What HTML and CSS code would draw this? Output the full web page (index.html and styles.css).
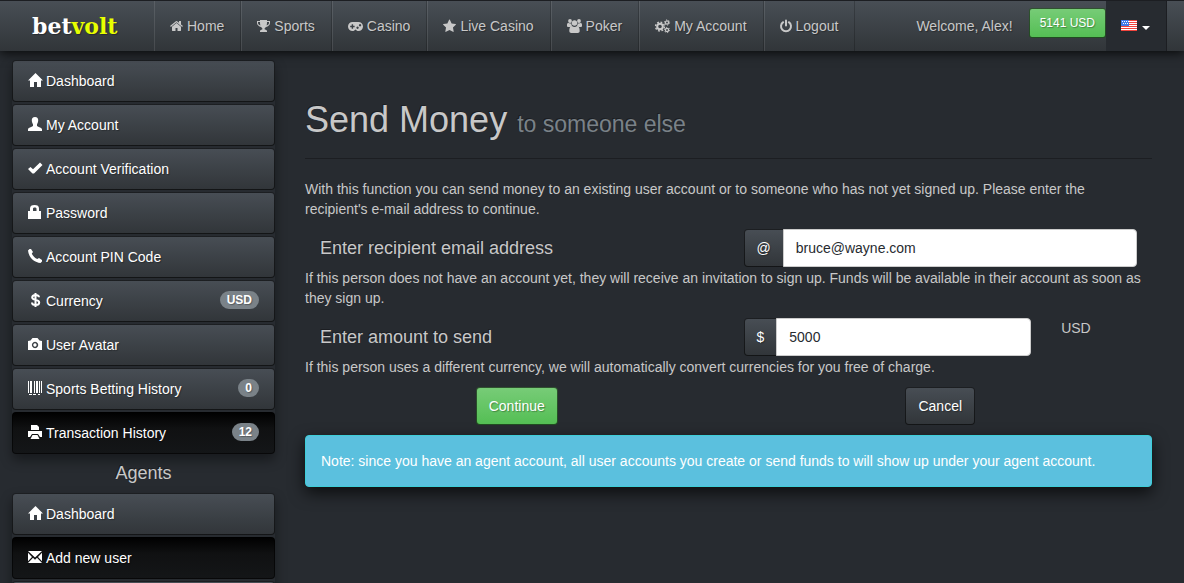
FILE: index.html
```html
<!DOCTYPE html>
<html lang="en">
<head>
<meta charset="UTF-8">
<meta name="viewport" content="width=device-width, initial-scale=1.0">
<title>Send Money - betvolt</title>
<link rel="stylesheet" href="styles.css">
</head>
<body>
<nav class="navbar">
    <a class="brand" href="#">bet<span>volt</span></a>
    <ul class="nav">
        <li><a href="#"><svg class="icon" width="13" height="14" viewBox="64 128 1664 1536"><path d="M1472 992v480q0 26-19 45t-45 19h-384v-384h-256v384h-384q-26 0-45-19t-19-45v-480q0-1 .5-3t.5-3l575-474 575 474q1 2 1 6zm223-69l-62 74q-8 9-21 11h-3q-13 0-21-7l-692-577-692 577q-12 8-24 7-13-2-21-11l-62-74q-8-10-7-23.500t11-21.500l719-599q32-26 76-26t76 26l244 204v-195q0-14 9-23t23-9h192q14 0 23 9t9 23v408l219 182q10 8 11 21.500t-7 23.500z"/></svg>Home</a></li>
        <li><a href="#"><svg class="icon" width="13" height="14" viewBox="0 0 13 14"><path d="M3 1h7v1h3v2c0 2-2 3.500-4 4-.7.900-1.500 1-1.500 2 0 .8 2.500.7 2.500 2v1H3v-1c0-1.300 2.500-1.200 2.500-2 0-1-.8-1.100-1.500-2C2 7.500 0 6 0 4V2h3zM1 3v1c0 1 1 2 2.400 2.600C3 5.500 3 4.300 3 3zM10 3c0 1.300 0 2.500-.4 3.600C11 6 12 5 12 4V3z" fill-rule="evenodd"/></svg>Sports</a></li>
        <li><a href="#"><svg class="icon" width="15" height="14" viewBox="0 0 15 14"><path d="M4.500 3h6a4.500 4.500 0 0 1 0 9c-1.400 0-2.300-.6-3-1.500-.7.900-1.600 1.500-3 1.500a4.500 4.500 0 0 1 0-9zM3.700 5.300v1.500H2.200v1.400h1.500v1.500h1.400V8.200h1.500V6.800H5.100V5.300zM9.500 7.500a1.200 1.200 0 1 0 .1 0zM12 5a1.200 1.200 0 1 0 .1 0z" fill-rule="evenodd"/></svg>Casino</a></li>
        <li><a href="#"><svg class="icon" width="13" height="14" viewBox="64 64 1664 1600"><path d="M1728 647q0 22-26 48l-363 354 86 500q1 7 1 20 0 21-10.500 35.500t-30.500 14.500q-19 0-40-12l-449-236-449 236q-22 12-40 12-21 0-31.500-14.500t-10.500-35.500q0-6 2-20l86-500-364-354q-25-27-25-48 0-37 56-46l502-73 225-455q19-41 49-41t49 41l225 455 502 73q56 9 56 46z"/></svg>Live Casino</a></li>
        <li><a href="#"><svg class="icon" width="15" height="14" viewBox="0 0 15 14"><circle cx="3" cy="2" r="1.900"/><circle cx="12" cy="2" r="1.900"/><circle cx="7.500" cy="4" r="2.700"/><path d="M0 7V5.500C0 4 1 4 1.500 4c1 .6 2 .6 2.800.2C4.200 5.500 4.800 6.300 5 6.700 4 7 3.500 7.400 3 8H1.500C.6 8 0 7.600 0 7zM15 7V5.500C15 4 14 4 13.500 4c-1 .6-2 .6-2.800.2.1 1.300-.5 2.100-.7 2.500 1 .3 1.500.7 2 1.300h1.500c.9 0 1.500-.4 1.500-1zM2.300 12c0-3 .7-5 2.700-5 1.500 1.200 3.500 1.200 5 0 2 0 2.700 2 2.700 5 0 1.200-.8 2-2 2H4.300c-1.200 0-2-.8-2-2z"/></svg>Poker</a></li>
        <li><a href="#"><svg class="icon" width="15" height="14" viewBox="0 0 15 14" fill="none"><circle cx="5" cy="7.500" r="2.800" stroke="currentColor" stroke-width="2"/><circle cx="5" cy="7.500" r="4.400" stroke="currentColor" stroke-width="1.500" stroke-dasharray="1.800 1.656"/><circle cx="12" cy="3.500" r="1.600" stroke="currentColor" stroke-width="1.300"/><circle cx="12" cy="3.500" r="2.600" stroke="currentColor" stroke-dasharray="1.200 1.522"/><circle cx="12" cy="11" r="1.600" stroke="currentColor" stroke-width="1.300"/><circle cx="12" cy="11" r="2.600" stroke="currentColor" stroke-dasharray="1.200 1.522"/></svg>My Account</a></li>
        <li><a href="#"><svg class="icon" width="12" height="14" viewBox="0 0 12 14" fill="none"><path d="M3.200 3.200a5 5 0 1 0 5.600 0M6 1.500v5" stroke="currentColor" stroke-width="2" stroke-linecap="round"/></svg>Logout</a></li>
    </ul>
    <div class="account">
        <span class="welcome">Welcome, Alex!</span>
        <button class="btn btn-success btn-small" type="button">5141 USD</button>
        <button class="language" type="button" aria-label="Language">
            <svg width="16" height="12" viewBox="0 0 16 12"><path fill="#fff" d="M0 0h16v11H0z"/><path d="M0 .5h16M0 2.500h16M0 4.500h16M0 6.500h16M0 8.500h16M0 10.500h16" stroke="#f0443c"/><path fill="#3f7bea" d="M0 0h8v6H0z"/><path d="M1 1.500h7M2 3.500h6" stroke="#fff" stroke-dasharray="1 1"/></svg>
            <span class="caret"></span>
        </button>
    </div>
</nav>

<div class="container">
    <aside class="sidebar">
        <div class="list">
            <a class="item" href="#"><svg class="icon" width="14" height="14" viewBox="0 0 14 14"><path d="M7.500 0L15 7.500h-2V14H9V9H6v5H2V7.500H0z"/></svg>Dashboard</a>
            <a class="item" href="#"><svg class="icon" width="14" height="14" viewBox="0 0 14 14"><path d="M7 0c2.300 0 3.400 1.500 3.200 3.700C10 5.700 9.300 6.500 9 7.500V9c1 1 5 1.600 5 3.500V14H0v-1.500C0 10.600 4 10 5 9V7.500c-.3-1-1-1.800-1.200-3.800C3.600 1.500 4.700 0 7 0z"/></svg>My Account</a>
            <a class="item" href="#"><svg class="icon" width="14" height="14" viewBox="0 0 14 14"><path d="M12 1.500l2.500 2.500L6 12.500H4.500L0 8l2.500-2L5 8.300z"/></svg>Account Verification</a>
            <a class="item" href="#"><svg class="icon" width="14" height="14" viewBox="0 0 14 14"><path d="M0 6h2V3.500C2 1 3.500 0 6.500 0S11 1 11 3.500V6h2v8H0zM5 6h3.500V3.500c0-1.500-3.500-1.500-3.500 0z" fill-rule="evenodd"/></svg>Password</a>
            <a class="item" href="#"><svg class="icon" width="14" height="14" viewBox="0 0 14 14"><path d="M0 1.500L1.500 0H3l2 3-1.200 1.500c.8 2.300 3.200 4.700 5.500 5.600L11 9l3 2v1.500L12.500 14C6 13.500.5 8 0 1.500z"/></svg>Account PIN Code</a>
            <a class="item" href="#"><svg class="icon" width="14" height="14" viewBox="0 0 14 14" fill="none"><path d="M7.500 0v14M11 4.300C11 2.700 9.600 2 7.600 2S4.200 3 4.200 4.500C4.200 7.500 11.200 6 11.200 9.500c0 1.700-1.500 2.500-3.600 2.500S4 11.200 4 9.500" stroke="currentColor" stroke-width="2"/></svg>Currency<span class="badge">USD</span></a>
            <a class="item" href="#"><svg class="icon" width="14" height="14" viewBox="0 0 14 14"><path d="M0 4l2.500-.5L4.500 1h5l2 2.500L14 4v9H0zM7 4.800a3.200 3.200 0 1 0 .1 0zM7 6.300a1.700 1.700 0 1 1-.1 0z" fill-rule="evenodd"/></svg>User Avatar</a>
            <a class="item" href="#"><svg class="icon" width="14" height="14" viewBox="0 0 14 14"><path d="M0 0h1v12H0zM2 0h2v12H2zM6 0h1v12H6zM8 0h2v12H8zM11 0h1v12h-1zM13 0h1v12h-1zM1 13h3v1H1zM5 13h3v1H5zM10 13h2v1h-2z"/></svg>Sports Betting History<span class="badge">0</span></a>
            <a class="item active" href="#"><svg class="icon" width="14" height="14" viewBox="0 0 14 14"><path d="M3 0h6l2 2v3H3zM0 6h14v6h-2l-2-3H4l-2 3H0zM4.500 10h5l2 4h-9z"/></svg>Transaction History<span class="badge">12</span></a>
        </div>
        <h4 class="list-title">Agents</h4>
        <div class="list">
            <a class="item" href="#"><svg class="icon" width="14" height="14" viewBox="0 0 14 14"><path d="M7.500 0L15 7.500h-2V14H9V9H6v5H2V7.500H0z"/></svg>Dashboard</a>
            <a class="item active" href="#"><svg class="icon" width="14" height="14" viewBox="0 0 14 14"><path d="M0 1h14L7 7.500zM0 2.800L4 7 0 11.200zM14 2.800v8.400L10 7zM5 7.800l2 2 2-2 5 5.200H0z"/></svg>Add new user</a>
            <div class="item"></div>
        </div>
    </aside>

    <main class="content">
        <h1>Send Money <small>to someone else</small></h1>
        <form>
            <p class="intro">With this function you can send money to an existing user account or to someone who has not yet signed up. Please enter the recipient's e-mail address to continue.</p>
            <div class="row">
                <h4><label for="email">Enter recipient email address</label></h4>
                <div class="field">
                    <div class="input-group">
                        <span class="addon">@</span>
                        <input type="text" id="email" value="bruce@wayne.com">
                    </div>
                </div>
            </div>
            <p>If this person does not have an account yet, they will receive an invitation to sign up. Funds will be available in their account as soon as they sign up.</p>
            <div class="row">
                <h4><label for="amount">Enter amount to send</label></h4>
                <div class="field-amount">
                    <div class="input-group">
                        <span class="addon">$</span>
                        <input type="text" id="amount" value="5000">
                    </div>
                    <span>USD</span>
                </div>
            </div>
            <p>If this person uses a different currency, we will automatically convert currencies for you free of charge.</p>
            <div class="row buttons">
                <div><button class="btn btn-success" type="submit">Continue</button></div>
                <div><button class="btn" type="button">Cancel</button></div>
            </div>
        </form>
        <div class="alert">Note: since you have an agent account, all user accounts you create or send funds to will show up under your agent account.</div>
    </main>
</div>
</body>
</html>
```
FILE: styles.css
```css
* {
    box-sizing: border-box;
}

body {
    margin: 0;
    background-color: #272b30;
    color: #c8c8c8;
    font-family: "Liberation Sans", Arial, sans-serif;
    font-size: 14px;
    line-height: 20px;
}

a {
    color: inherit;
    text-decoration: none;
}

input,
button {
    font: inherit;
}

.icon {
    flex: none;
    fill: currentColor;
    margin-right: 4px;
    overflow: visible;
}

.icon[fill="none"] {
    fill: none;
}

/* top bar */
.navbar {
    display: flex;
    height: 51px;
    border-top: 1px solid #1c1e22;
    background-image: linear-gradient(#484e55, #3a3f44 60%, #313539);
    box-shadow: 0 2px 10px rgba(0, 0, 0, 0.8);
    text-shadow: 1px 1px 1px rgba(0, 0, 0, 0.3);
    position: relative;
}

.brand {
    width: 154px;
    padding-left: 32px;
    font-family: "DejaVu Serif", serif;
    font-size: 22px;
    font-weight: bold;
    line-height: 50px;
    color: #fff;
}

.brand span {
    color: #e8ff00;
}

.nav {
    display: flex;
    list-style: none;
    margin: 0;
    padding: 0;
}

.nav a {
    display: flex;
    align-items: center;
    height: 50px;
    padding: 0 16px 0 15px;
    border-left: 1px solid rgba(255, 255, 255, 0.1);
    border-right: 1px solid rgba(0, 0, 0, 0.2);
}

.account {
    display: flex;
    margin-left: auto;
    margin-right: 17px;
}

.welcome {
    padding: 15px 16px;
}

.btn {
    padding: 8px 12px;
    border: 1px solid rgba(0, 0, 0, 0.6);
    border-radius: 4px;
    background: linear-gradient(#484e55, #3a3f44 60%, #313539) border-box;
    color: #fff;
    text-shadow: 1px 1px 1px rgba(0, 0, 0, 0.3);
    cursor: pointer;
}

.btn-success {
    background: linear-gradient(#78cc78, #62c462 60%, #53be53) border-box;
}

.btn-small {
    align-self: flex-start;
    margin-top: 7px;
    padding: 5px 10px;
    border-radius: 3px;
    font-size: 12px;
    line-height: 18px;
}

.language {
    display: flex;
    align-items: center;
    gap: 5px;
    width: 61px;
    padding: 0 15px;
    border: 0;
    border-right: 1px solid #1c1e22;
    background-color: #272b30;
    cursor: pointer;
}

.caret {
    margin-top: 4px;
    border-top: 4px solid #fff;
    border-left: 4px solid transparent;
    border-right: 4px solid transparent;
}

.container {
    display: grid;
    grid-template-columns: 263px 1fr;
    gap: 30px;
    padding: 9px 32px 0 12px;
}

/* side menu */
.list {
    display: flex;
    flex-direction: column;
    gap: 2px;
    border-radius: 4px;
    box-shadow: 0 6px 12px rgba(0, 0, 0, 0.4);
}

.item {
    display: flex;
    align-items: center;
    height: 42px;
    padding: 0 15px;
    border: 1px solid rgba(0, 0, 0, 0.6);
    border-radius: 4px;
    background: linear-gradient(#484e55, #3a3f44 60%, #313539) border-box;
    color: #fff;
    text-shadow: 1px 1px 1px rgba(0, 0, 0, 0.3);
}

.item.active {
    background: linear-gradient(#000, #101112 40%, #141618) border-box;
}

.item .icon,
.badge {
    margin-bottom: 2px;
}

.badge {
    margin-left: auto;
    padding: 3px 7px;
    border-radius: 10px;
    background-color: #7a8288;
    font-size: 12px;
    font-weight: bold;
    line-height: 12px;
}

h1,
h4 {
    font-weight: normal;
    text-shadow: -1px -1px 0 rgba(0, 0, 0, 0.3);
}

h4 {
    margin: 10px 0;
    font-size: 18px;
    line-height: 19px;
}

.list-title {
    text-align: center;
}

/* send money form */
h1 {
    margin: 40px 0 20px;
    padding-bottom: 14px;
    border-bottom: 1px solid #1c1e22;
    font-size: 36px;
    line-height: 40px;
}

h1 small {
    color: #7a8288;
    font-size: 23px;
}

p {
    margin: 0 0 10px;
}

.row + p {
    margin-top: 0;
}

.intro {
    padding-right: 15px;
}

.row {
    display: grid;
    grid-template-columns: 1fr 1fr;
}

.row h4 {
    padding-left: 15px;
}

.field {
    padding: 0 15px;
}

.field-amount {
    display: grid;
    grid-template-columns: 3fr 1fr;
}

.field-amount > * {
    margin: 0 15px;
}

.input-group {
    display: flex;
    height: 38px;
}

.addon {
    padding: 8px 12px;
    border: 1px solid rgba(0, 0, 0, 0.6);
    border-right: 0;
    border-radius: 4px 0 0 4px;
    background: linear-gradient(#484e55, #3a3f44 60%, #313539) border-box;
    color: #fff;
    font-size: 14px;
    text-shadow: 1px 1px 1px rgba(0, 0, 0, 0.3);
}

.input-group input {
    flex: 1;
    min-width: 0;
    padding: 8px 12px;
    border: 1px solid #ccc;
    border-radius: 0 4px 4px 0;
    background-color: #fff;
    color: #272b30;
}

.buttons {
    text-align: center;
    margin-bottom: 10px;
}

.alert {
    padding: 15px;
    border: 1px solid #3dced8;
    border-radius: 4px;
    background-color: #5bc0de;
    box-shadow: 0 6px 16px rgba(0, 0, 0, 0.7);
    color: #fff;
}
```
